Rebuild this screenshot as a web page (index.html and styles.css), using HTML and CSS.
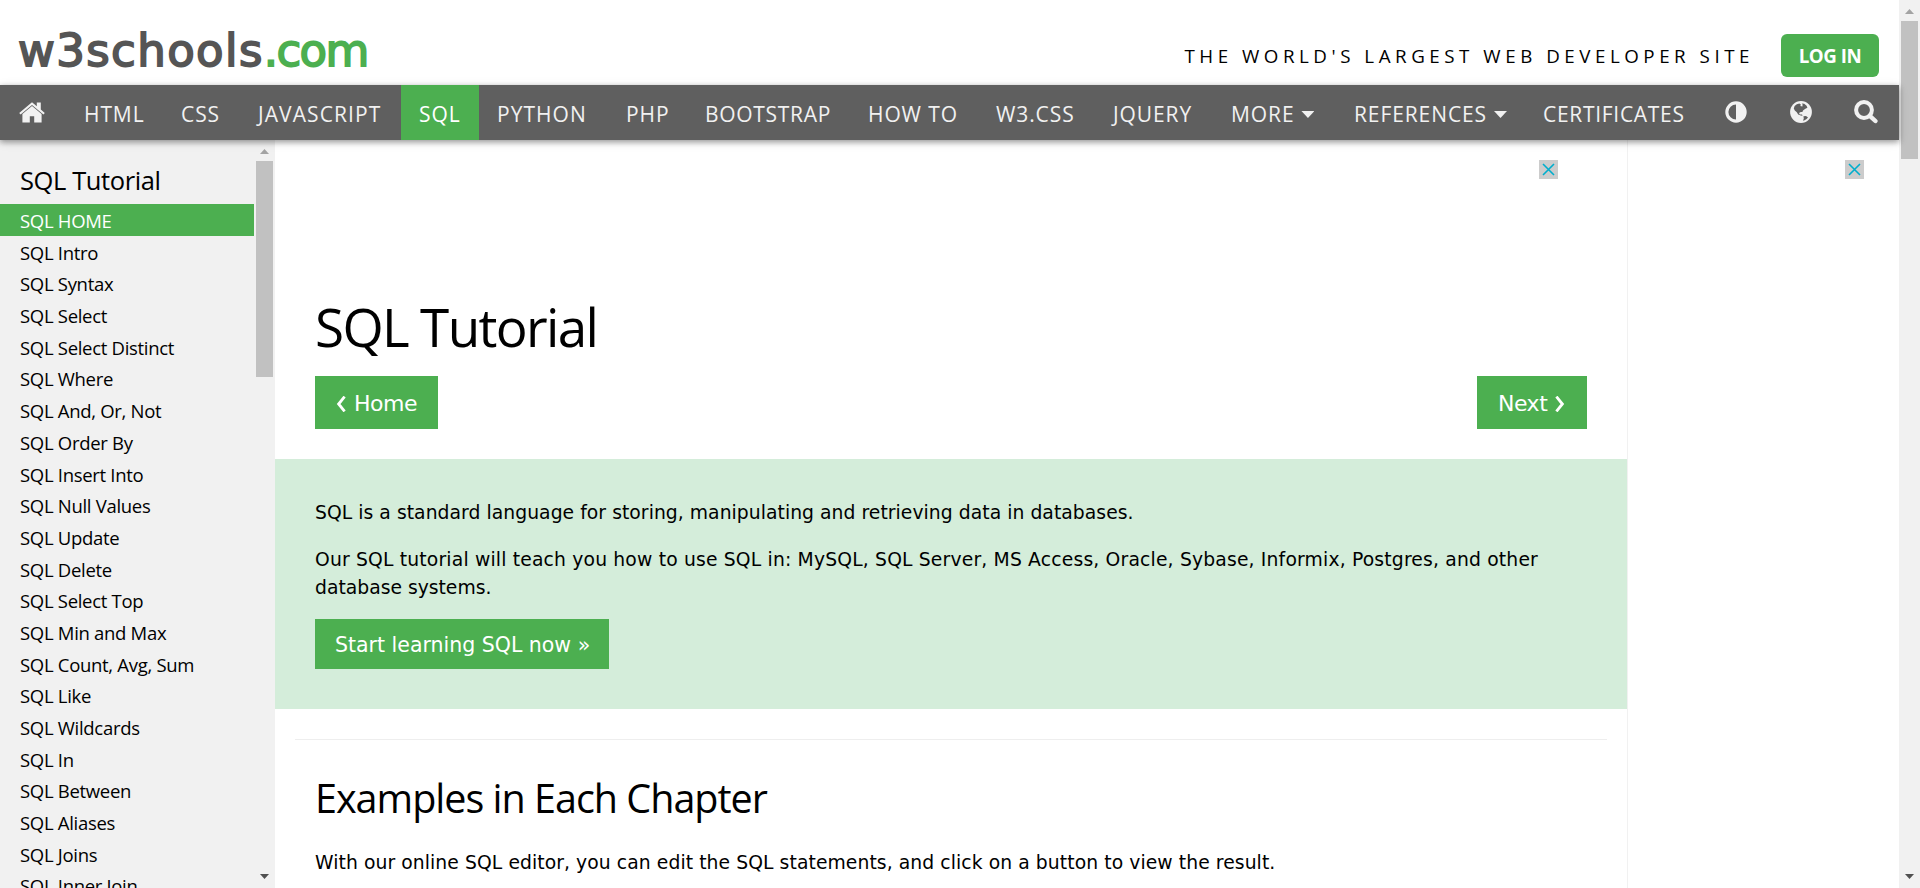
FILE: index.html
```html
<!DOCTYPE html>
<html lang="en">
<head>
<meta charset="utf-8">
<title>SQL Tutorial</title>
<link rel="stylesheet" href="styles.css">
</head>
<body>
<div class="page">
  <header class="header">
    <a class="logo"><span>w3schools</span><span class="dotcom">.com</span></a>
    <div class="header-right">
      <span class="tagline">THE WORLD'S LARGEST WEB DEVELOPER SITE</span>
      <a class="login">LOG IN</a>
    </div>
  </header>
  <nav class="nav">
    <a><svg class="home" viewBox="0 0 26 21"><path d="M13 0.2 L0.2 11 L1.6 12.6 L13 3.1 L24.4 12.6 L25.8 11 L21.8 7.6 V0.4 H17.8 V4.2 Z M13 4 L3.4 12 V20.4 H10.8 V14.2 H15.2 V20.4 H22.6 V12 Z"/></svg></a>
    <a>HTML</a>
    <a>CSS</a>
    <a>JAVASCRIPT</a>
    <a class="active">SQL</a>
    <a>PYTHON</a>
    <a>PHP</a>
    <a>BOOTSTRAP</a>
    <a>HOW TO</a>
    <a>W3.CSS</a>
    <a>JQUERY</a>
    <a>MORE<i class="caret"></i></a>
    <a>REFERENCES<i class="caret"></i></a>
    <a>CERTIFICATES</a>
    <a class="ico"><svg width="22" height="22" viewBox="0 0 22 22"><path fill-rule="evenodd" d="M11 .3a10.7 10.7 0 1 0 0 21.4A10.7 10.7 0 0 0 11 .3ZM11 3.4V18.6A7.6 7.6 0 0 1 11 3.4Z"/></svg></a>
    <a class="ico"><svg width="22" height="22" viewBox="0 0 22 22"><circle cx="11" cy="11" r="10.9"/><path class="land" d="M4.6 5 6.8 3.2 9.4 2.6 11 3.8 10.2 5 12.4 5.4 12.6 3.4 11.8 2.4 14.2 2.8 16.6 4.8 17.4 6.8 15 8 13 9.4 12.4 11 10.8 11 9 12 9.8 13.4 12 13.4 12.6 14.8 10.8 14.6 8.2 13.4 6.8 11.2 4.8 9.6 3.8 7.4ZM13.4 15.2 16 15 18 16.4 16.6 18 14.6 19.2 13 19.8 13.8 17.4Z"/></svg></a>
    <a class="ico"><svg width="24" height="24" viewBox="0 0 24 24"><circle class="lens" cx="10" cy="10" r="7.9"/><path class="handle" d="M15.8 15.8 21.4 21"/></svg></a>
  </nav>
  <div class="body">
    <aside class="side">
      <div class="menu">
        <h2>SQL Tutorial</h2>
        <a class="active">SQL HOME</a>
        <a>SQL Intro</a>
        <a>SQL Syntax</a>
        <a>SQL Select</a>
        <a>SQL Select Distinct</a>
        <a>SQL Where</a>
        <a>SQL And, Or, Not</a>
        <a>SQL Order By</a>
        <a>SQL Insert Into</a>
        <a>SQL Null Values</a>
        <a>SQL Update</a>
        <a>SQL Delete</a>
        <a>SQL Select Top</a>
        <a>SQL Min and Max</a>
        <a>SQL Count, Avg, Sum</a>
        <a>SQL Like</a>
        <a>SQL Wildcards</a>
        <a>SQL In</a>
        <a>SQL Between</a>
        <a>SQL Aliases</a>
        <a>SQL Joins</a>
        <a>SQL Inner Join</a>
      </div>
      <div class="bar bar-side"><i class="up"></i><b></b><i class="down"></i></div>
    </aside>
    <main class="main">
      <div class="ad"><svg class="close" viewBox="0 0 19 19"><path d="M4 4 15 15M15 4 4 15"/></svg></div>
      <h1>SQL Tutorial</h1>
      <div class="pager">
        <a class="btn"><svg class="chev" viewBox="0 0 10 16"><path d="M8.6 .6 2.6 8 8.6 15.4"/></svg><span>Home</span></a>
        <a class="btn next"><span>Next</span><svg class="chev" viewBox="0 0 10 16"><path d="M1.4 .6 7.4 8 1.4 15.4"/></svg></a>
      </div>
      <section class="intro">
        <p>SQL is a standard language for storing, manipulating and retrieving data in databases.</p>
        <p class="wide">Our SQL tutorial will teach you how to use SQL in: MySQL, SQL Server, MS Access, Oracle, Sybase, Informix, Postgres, and other <span class="tight">database systems.</span></p>
        <a class="start">Start learning SQL now »</a>
      </section>
      <hr>
      <h2 class="sub">Examples in Each Chapter</h2>
      <p class="text">With our online SQL editor, you can edit the SQL statements, and click on a button to view the result.</p>
    </main>
    <aside class="right"><svg class="close" viewBox="0 0 19 19"><path d="M4 4 15 15M15 4 4 15"/></svg></aside>
  </div>
</div>
<div class="bar bar-page"><i class="up"></i><b></b><i class="down"></i></div>
</body>
</html>
```
FILE: styles.css
```css
* { box-sizing: border-box; }
body {
  margin: 0;
  height: 888px;
  display: flex;
  overflow: hidden;
  background: #fff;
  color: #000;
  font-family: "DejaVu Sans", Verdana, sans-serif;
  font-size: 18.75px;
}
.page { width: 1899px; height: 888px; display: flex; flex-direction: column; }
.header { height: 85px; flex: none; display: flex; justify-content: space-between; padding: 0 20px 0 18px; }
.logo {
  font-size: 45px;
  line-height: 52px;
  padding-top: 25px;
  color: #555;
  letter-spacing: 1.4px;
  -webkit-text-stroke: 1.8px currentColor;
  white-space: nowrap;
}
.dotcom { color: #4caf50; letter-spacing: -1.6px; }
.header-right { display: flex; font-family: "Open Sans", "Segoe UI", sans-serif; }
.tagline { padding-top: 43px; line-height: 25px; letter-spacing: 4.53px; margin-right: 27px; white-space: nowrap; }
.login {
  width: 98px; height: 43px; margin-top: 34px;
  border-radius: 6px;
  background: #4caf50; color: #fff;
  font-weight: 700; line-height: 43px; text-align: center; letter-spacing: -0.5px;
}
.nav {
  position: relative; z-index: 2;
  flex: none; height: 55px; display: flex;
  background: #5f5f5f; color: #f1f1f1;
  font-family: "Open Sans", "Segoe UI", sans-serif;
  font-size: 21px; letter-spacing: .9px;
  box-shadow: 0 2px 5px rgba(0,0,0,.16), 0 2px 10px rgba(0,0,0,.12), 0 2px 6px rgba(0,0,0,.2);
}
.nav a { flex: none; display: flex; justify-content: flex-start; padding-left: 18px; line-height: 59px; white-space: nowrap; }
.nav a:nth-child(1) { width: 66px; }
.nav a:nth-child(2) { width: 97px; }
.nav a:nth-child(3) { width: 77px; }
.nav a:nth-child(4) { width: 161px; letter-spacing: 1.1px; }
.nav a:nth-child(5) { width: 78px; }
.nav a:nth-child(6) { width: 129px; letter-spacing: 1.05px; }
.nav a:nth-child(7) { width: 79px; }
.nav a:nth-child(8) { width: 163px; letter-spacing: .7px; }
.nav a:nth-child(9) { width: 128px; }
.nav a:nth-child(10) { width: 117px; }
.nav a:nth-child(11) { width: 118px; }
.nav a:nth-child(12) { width: 123px; }
.nav a:nth-child(13) { width: 189px; }
.nav a:nth-child(14) { width: 178px; letter-spacing: .7px; }
.nav .ico { width: 65px; padding: 16px 0 0 22px; }
.nav .ico:last-child { padding: 15px 0 0 21px; }
.nav .active { background: #4caf50; color: #fff; }
.nav svg { fill: #f1f1f1; }
.home { width: 26px; height: 21px; margin: 17px 0 0 1px; }
.nav .land { fill: #5f5f5f; }
.nav .lens { fill: none; stroke: #f1f1f1; stroke-width: 4; }
.nav .handle { stroke: #f1f1f1; stroke-width: 4.4; stroke-linecap: round; }
.caret { width: 13px; height: 7px; margin: 26px 0 0 7px; background: #f1f1f1; clip-path: polygon(0 0, 100% 0, 50% 100%); }
.body { flex: 1; min-height: 0; display: flex; }
.side { width: 275px; flex: none; display: flex; justify-content: space-between; background: #f1f1f1; overflow: hidden; }
.menu { width: 254px; font-family: "Open Sans", "Segoe UI", sans-serif; font-size: 18.5px; white-space: nowrap; }
.menu h2 { margin: 0; height: 64px; padding: 23px 0 0 20px; font-size: 25.5px; font-weight: 400; line-height: 34px; letter-spacing: -0.4px; }
.menu a { display: block; height: 31.7px; padding-left: 20px; line-height: 33px; letter-spacing: -0.3px; }
.menu .active { background: #4caf50; color: #fff; }
.bar { display: flex; flex-direction: column; align-items: center; background: #f1f1f1; }
.bar b { width: 17px; background: #c1c1c1; }
.bar i { width: 9px; height: 5px; }
.up { background: #a3a3a3; clip-path: polygon(50% 0, 100% 100%, 0 100%); }
.down { background: #505050; clip-path: polygon(0 0, 100% 0, 50% 100%); margin-top: auto; }
.bar-side { width: 19px; margin-right: 1px; padding: 9px 0; }
.bar-side b { height: 216px; margin-top: 7px; }
.bar-page { width: 21px; padding: 9px 0; }
.bar-page b { height: 138px; margin-top: 7px; }
.main { width: 1353px; flex: none; border-right: 1px solid #f1f1f1; overflow: hidden; }
.ad { height: 143px; display: flex; justify-content: flex-end; padding: 20px 69px 0 0; }
.close { width: 19px; height: 19px; background: #ccc; fill: none; stroke: #00aecd; stroke-width: 1.6; }
h1 { margin: 0 0 0 40px; height: 93px; line-height: 88px; font-family: "Open Sans", "Segoe UI", sans-serif; font-weight: 400; font-size: 53px; letter-spacing: -1.65px; }
.pager { display: flex; justify-content: space-between; padding: 0 40px; height: 83px; }
.btn { height: 53px; width: 123px; display: flex; align-items: center; padding: 2px 0 0 21px; gap: 8px; background: #4caf50; color: #fff; font-size: 22px; letter-spacing: -.5px; }
.next { width: 110px; }
.chev { width: 10px; height: 16px; fill: none; stroke: #fff; stroke-width: 2.8; }
.intro { height: 250px; padding: 40px 40px 0; background: #d4edda; }
.intro p { margin: 0 0 18.75px; line-height: 28.1px; letter-spacing: .05px; }
.intro .wide { letter-spacing: .17px; }
.tight { letter-spacing: 0; }
.start { display: block; width: 294px; height: 50px; margin-top: -2px; padding-left: 20px; background: #4caf50; color: #fff; font-size: 20.5px; line-height: 52px; white-space: nowrap; }
hr { margin: 30px 20px 0; border: 0; border-top: 1px solid #eee; }
.sub { margin: 0 0 0 40px; padding-top: 30px; height: 109px; font-family: "Open Sans", "Segoe UI", sans-serif; font-weight: 400; font-size: 39.5px; line-height: 56px; letter-spacing: -1px; }
.text { margin: 0 0 0 40px; line-height: 28px; letter-spacing: .08px; white-space: nowrap; }
.right { flex: 1; display: flex; justify-content: flex-end; padding: 20px 35px 0 0; }
```
